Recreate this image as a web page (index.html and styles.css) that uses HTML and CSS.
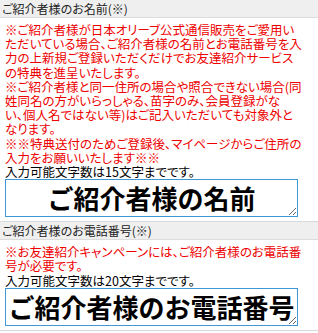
FILE: index.html
```html
<!DOCTYPE html>
<html lang="ja">

<head>
    <meta charset="UTF-8" />
    <title>ご紹介者様</title>
    <link rel="stylesheet" href="styles.css">
</head>

<body>
    <div class="item">
        <div class="item-title">ご紹介者様のお名前(※)</div>
        <div class="item-body">
            <p class="note">※ご紹介者様が日本オリーブ公式通信販売をご愛用い<br>ただいている場合、ご紹介者様の名前とお電話番号を入<br>力の上新規ご登録いただくだけでお友達紹介サービス<br>の特典を進呈いたします。<br>※ご紹介者様と同一住所の場合や照合できない場合(同<br>姓同名の方がいらっしゃる、苗字のみ、会員登録がな<br>い、個人名ではない等)はご記入いただいても対象外と<br>なります。<br>※※特典送付のためご登録後、マイページからご住所の<br>入力をお願いいたします※※</p>
            <p class="limit">入力可能文字数は15文字までです。</p>
            <textarea class="input" id="shokai_name">ご紹介者様の名前</textarea>
        </div>
    </div>

    <div class="item">
        <div class="item-title">ご紹介者様のお電話番号(※)</div>
        <div class="item-body">
            <p class="note">※お友達紹介キャンペーンには、ご紹介者様のお電話番<br>号が必要です。</p>
            <p class="limit">入力可能文字数は20文字までです。</p>
            <textarea class="input" id="shokai_tel">ご紹介者様のお電話番号</textarea>
        </div>
    </div>
</body>

</html>
```

FILE: styles.css
```css
body {
    margin: 0;
    background: #fff;
    font-family: "Noto Sans CJK JP", "Noto Sans", sans-serif;
    font-size: 12.5px;
    color: #000;
}

.item {
    border-bottom: 1px solid #d9d9d9;
    padding-bottom: 4px;
}

.item-title {
    background: #efefef;
    border-bottom: 1px solid #dcdcdc;
    height: 17px;
    line-height: 17px;
    padding: 0 2px;
    color: #222;
    font-size: 12px;
    font-feature-settings: "palt";
    white-space: nowrap;
}

.item-body {
    padding: 5px 0 0 5px;
}

.note,
.limit {
    margin: 0;
    line-height: 14.2px;
    font-feature-settings: "palt";
    white-space: nowrap;
}

.note {
    color: #e00;
}

.input {
    display: block;
    box-sizing: border-box;
    width: 293px;
    height: 38px;
    margin: 0;
    padding: 1px 2px;
    border: 1px solid #3f97d6;
    font-family: "Noto Sans CJK JP", sans-serif;
    font-size: 26px;
    font-weight: bold;
    line-height: 33px;
    text-align: center;
    color: #000;
    overflow: hidden;
}
```
